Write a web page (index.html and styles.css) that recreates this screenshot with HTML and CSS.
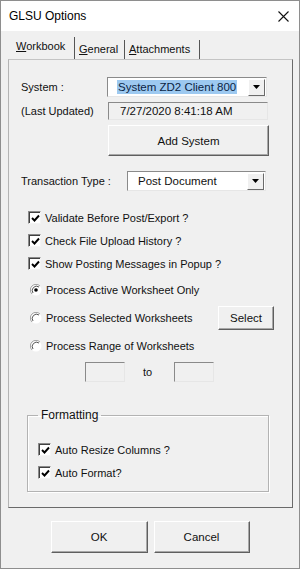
FILE: index.html
```html
<!DOCTYPE html>
<html lang="en">
<head>
    <meta charset="UTF-8">
    <title>GLSU Options</title>
    <link rel="stylesheet" href="styles.css">
</head>
<body>
    <div class="window">
        <div class="titlebar">
            <span class="title">GLSU Options</span>
            <svg class="close" width="11" height="11" viewBox="0 0 11 11">
                <path d="M0.5 0.5 L10.5 10.5 M10.5 0.5 L0.5 10.5" stroke="#111" stroke-width="1.1" fill="none"/>
            </svg>
        </div>

        <div class="content">
            <div class="tabs">
                <div class="tab active tab-workbook"><u>W</u>orkbook</div>
                <div class="tab tab-general"><u>G</u>eneral</div>
                <div class="tab tab-attach"><u>A</u>ttachments</div>
            </div>

            <div class="panel">
                <div class="row row-system">
                    <label class="label label-system">System :</label>
                    <div class="combo combo-system">
                        <span class="combo-text"><span class="selected">System ZD2 Client 800</span></span>
                        <span class="drop"><svg width="7" height="4" viewBox="0 0 7 4"><path d="M0 0 H7 L3.5 4 Z" fill="#000"/></svg></span>
                    </div>
                </div>

                <div class="row row-updated">
                    <label class="label label-system">(Last Updated)</label>
                    <div class="readonly">7/27/2020 8:41:18 AM</div>
                </div>

                <div class="row row-add">
                    <button class="btn btn-add">Add System</button>
                </div>

                <div class="row row-trans">
                    <label class="label label-trans">Transaction Type :</label>
                    <div class="combo combo-trans">
                        <span class="combo-text">Post Document</span>
                        <span class="drop"><svg width="7" height="4" viewBox="0 0 7 4"><path d="M0 0 H7 L3.5 4 Z" fill="#000"/></svg></span>
                    </div>
                </div>

                <div class="checks">
                    <div class="check-row">
                        <span class="checkbox"><svg width="9" height="9" viewBox="0 0 9 9"><path d="M1 4 L3.5 6.5 L8 1.5" stroke="#000" stroke-width="1.9" fill="none"/></svg></span>
                        <span>Validate Before Post/Export ?</span>
                    </div>
                    <div class="check-row">
                        <span class="checkbox"><svg width="9" height="9" viewBox="0 0 9 9"><path d="M1 4 L3.5 6.5 L8 1.5" stroke="#000" stroke-width="1.9" fill="none"/></svg></span>
                        <span>Check File Upload History ?</span>
                    </div>
                    <div class="check-row">
                        <span class="checkbox"><svg width="9" height="9" viewBox="0 0 9 9"><path d="M1 4 L3.5 6.5 L8 1.5" stroke="#000" stroke-width="1.9" fill="none"/></svg></span>
                        <span>Show Posting Messages in Popup ?</span>
                    </div>
                </div>

                <div class="radios">
                    <div class="radio-row">
                        <svg class="radio" width="12" height="12" viewBox="0 0 12 12">
                            <circle cx="6" cy="6" r="5.5" fill="#fff"/>
                            <path d="M10 2 A5.5 5.5 0 0 0 2 10" stroke="#a0a0a0" stroke-width="1" fill="none"/>
                            <path d="M9 3 A4.3 4.3 0 0 0 3 9" stroke="#555" stroke-width="1" fill="none"/>
                            <circle cx="6" cy="6" r="1.8" fill="#000"/>
                        </svg>
                        <span>Process Active Worksheet Only</span>
                    </div>
                    <div class="radio-row">
                        <svg class="radio" width="12" height="12" viewBox="0 0 12 12">
                            <circle cx="6" cy="6" r="5.5" fill="#fff"/>
                            <path d="M10 2 A5.5 5.5 0 0 0 2 10" stroke="#a0a0a0" stroke-width="1" fill="none"/>
                            <path d="M9 3 A4.3 4.3 0 0 0 3 9" stroke="#555" stroke-width="1" fill="none"/>
                        </svg>
                        <span>Process Selected Worksheets</span>
                        <button class="btn btn-select">Select</button>
                    </div>
                    <div class="radio-row">
                        <svg class="radio" width="12" height="12" viewBox="0 0 12 12">
                            <circle cx="6" cy="6" r="5.5" fill="#fff"/>
                            <path d="M10 2 A5.5 5.5 0 0 0 2 10" stroke="#a0a0a0" stroke-width="1" fill="none"/>
                            <path d="M9 3 A4.3 4.3 0 0 0 3 9" stroke="#555" stroke-width="1" fill="none"/>
                        </svg>
                        <span>Process Range of Worksheets</span>
                    </div>
                </div>

                <div class="range">
                    <div class="range-box"></div>
                    <span class="range-to">to</span>
                    <div class="range-box"></div>
                </div>

                <fieldset class="group">
                    <legend>Formatting</legend>
                    <div class="check-row">
                        <span class="checkbox"><svg width="9" height="9" viewBox="0 0 9 9"><path d="M1 4 L3.5 6.5 L8 1.5" stroke="#000" stroke-width="1.9" fill="none"/></svg></span>
                        <span>Auto Resize Columns ?</span>
                    </div>
                    <div class="check-row">
                        <span class="checkbox"><svg width="9" height="9" viewBox="0 0 9 9"><path d="M1 4 L3.5 6.5 L8 1.5" stroke="#000" stroke-width="1.9" fill="none"/></svg></span>
                        <span>Auto Format?</span>
                    </div>
                </fieldset>
            </div>

            <div class="actions">
                <button class="btn btn-ok">OK</button>
                <button class="btn btn-cancel">Cancel</button>
            </div>
        </div>
    </div>
</body>
</html>
```

FILE: styles.css
```css
body {
    margin: 0;
    font-family: 'Liberation Sans', Arial, sans-serif;
    font-size: 11px;
    color: #111;
}
.window {
    width: 300px;
    height: 569px;
    box-sizing: border-box;
    border: 1px solid #8e8e8e;
    background-color: #f0f0f0;
}
.titlebar {
    height: 30px;
    background-color: #fff;
    display: flex;
    align-items: center;
    justify-content: space-between;
    padding: 0 10px 0 8px;
}
.title {
    font-size: 12px;
    color: #000;
}
.content {
    padding: 6px 0 0 7px;
}

/* tabs */
.tabs {
    display: flex;
    align-items: flex-end;
    height: 22px;
    padding-left: 2px;
}
.tab {
    box-sizing: border-box;
    height: 19px;
    line-height: 18px;
    border-right: 1px solid #555;
    padding-left: 4px;
}
.tab.active {
    height: 22px;
    line-height: 19px;
    padding-left: 6px;
}
.tab-workbook { width: 65px; }
.tab-general { width: 50px; }
.tab-attach { width: 75px; }

.panel {
    box-sizing: border-box;
    width: 285px;
    height: 449px;
    border: 1px solid;
    border-color: #c4c4c4 #6a6a6a #6a6a6a #b4b4b4;
    padding-left: 12px;
}

.row {
    display: flex;
    align-items: center;
}
.label-system { width: 86px; }
.label-trans { width: 106px; }
.row-system {
    margin-top: 17px;
    height: 20px;
}
.row-updated {
    margin-top: 5px;
    height: 18px;
}
.row-add {
    margin-top: 5px;
    padding-left: 87px;
}
.row-trans {
    margin-top: 15px;
    height: 20px;
}

.combo {
    box-sizing: border-box;
    height: 20px;
    background-color: #fff;
    border: 1px solid;
    border-color: #8a8a8a #e6e6e6 #e6e6e6 #8a8a8a;
    display: flex;
    align-items: center;
    justify-content: space-between;
    padding-right: 1px;
}
.combo-system { width: 160px; }
.combo-trans { width: 139px; }
.combo-text {
    padding-left: 9px;
    font-size: 11.5px;
}
.combo-trans .combo-text { padding-left: 10px; }
.selected {
    background-color: #9dc9f0;
    color: #0b1f44;
    padding: 1px 1px;
}
.drop {
    box-sizing: border-box;
    width: 17px;
    height: 17px;
    background-color: #f0f0f0;
    border: 1px solid;
    border-color: #fff #6a6a6a #6a6a6a #fff;
    display: flex;
    align-items: center;
    justify-content: center;
}

.readonly {
    box-sizing: border-box;
    width: 160px;
    height: 18px;
    margin-left: 1px;
    border: 1px solid;
    border-color: #8a8a8a #e6e6e6 #e6e6e6 #8a8a8a;
    line-height: 16px;
    padding-left: 11px;
    font-size: 11.5px;
}

.btn {
    box-sizing: border-box;
    background-color: #f0f0f0;
    border: 1px solid;
    border-color: #fff #5f5f5f #5f5f5f #fff;
    box-shadow: inset -1px -1px #a8a8a8;
    font-family: inherit;
    font-size: 11.5px;
    color: #111;
    padding: 0;
}
.btn-add {
    width: 161px;
    height: 31px;
}
.btn-select {
    width: 56px;
    height: 24px;
    margin-left: auto;
    margin-right: 18px;
}
.btn-ok {
    width: 97px;
    height: 32px;
}
.btn-cancel {
    width: 96px;
    height: 32px;
}

/* checks and radios */
.checks {
    margin-top: 15px;
}
.check-row {
    display: flex;
    align-items: center;
    height: 23px;
    padding-left: 7px;
}
.checkbox {
    box-sizing: border-box;
    width: 13px;
    height: 13px;
    background-color: #fff;
    border: 1px solid;
    border-color: #8a8a8a #f4f4f4 #f4f4f4 #8a8a8a;
    box-shadow: inset 1px 1px #404040;
    display: flex;
    align-items: center;
    justify-content: center;
    margin-right: 4px;
    padding: 1px 0 0 1px;
}
.radios {
    margin-top: 1px;
}
.radio-row {
    display: flex;
    align-items: center;
    height: 28px;
    padding-left: 9px;
}
.radio {
    margin-right: 4px;
}

.range {
    display: flex;
    align-items: center;
    margin-top: 2px;
    padding-left: 64px;
}
.range-box {
    box-sizing: border-box;
    width: 40px;
    height: 20px;
    border: 1px solid;
    border-color: #8a8a8a #e6e6e6 #e6e6e6 #8a8a8a;
}
.range-to {
    width: 49px;
    text-align: center;
    padding-right: 4px;
    box-sizing: border-box;
}

.group {
    margin: 26px 0 0 6px;
    width: 242px;
    height: 84px;
    box-sizing: border-box;
    padding: 16px 0 0 3px;
    border: 1px solid #b3b3b3;
    box-shadow: inset 1px 1px #fff, 1px 1px #fff;
}
.group legend {
    padding: 0 3px;
    margin-left: 7px;
    font-size: 12px;
}

.actions {
    display: flex;
    justify-content: center;
    gap: 6px;
    margin-top: 13px;
    padding-right: 7px;
}
```
